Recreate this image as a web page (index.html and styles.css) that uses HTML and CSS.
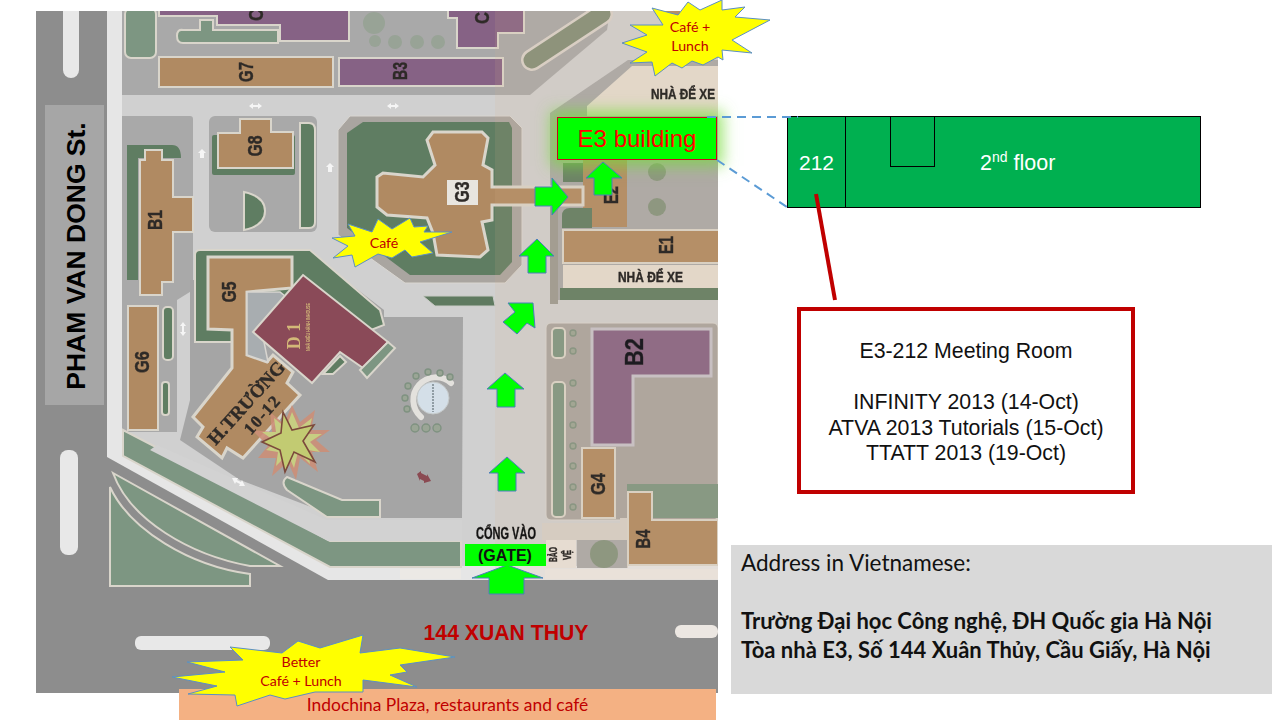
FILE: index.html
```html
<!DOCTYPE html>
<html lang="en">
<head>
<meta charset="utf-8">
<title>E3 building map</title>
<link rel="stylesheet" href="styles.css">
</head>
<body>
<main class="slide">
  <svg class="map" width="1280" height="720" viewBox="0 0 1280 720" aria-label="Campus map">
    <rect class="road" x="36" y="11" width="682" height="682"/>
    <path class="strip" d="M107 11H718V580H328L107 457Z"/>
    <path class="lane" d="M122 11H718V566H330L122 448Z"/>
    <rect class="median" x="63" y="0" width="16" height="78" rx="8"/>
    <rect class="median" x="60" y="450" width="18" height="105" rx="8"/>
    <rect class="median" x="135" y="636" width="135" height="14" rx="6"/>
    <rect class="median warm" x="675" y="625" width="43" height="13" rx="6"/>
    <path class="lawn edge" d="M110 487V586H250V574C190 566 130 530 110 487Z"/>
    <path class="lawn edge" d="M113 473L280 566H250C190 555 130 520 113 473Z"/>

    <!-- top blocks -->
    <path class="block" d="M122 11H610L607 30L530 95H122Z"/>
    <rect class="lawn edge" x="125" y="8" width="31" height="50" rx="6"/>
    <path class="lawn edge" d="M200 20H213V30H278V43H183Q177 43 177 36T183 30H200Z"/>
    <path class="purple edge" d="M159 8V16H217V25H280V41H349V8Z"/>
    <rect class="tan edge" x="159" y="57" width="174" height="30"/>
    <rect class="purple edge" x="339" y="58" width="164" height="28"/>
    <path class="purple edge" d="M448 8V18H457V48H498V33H524V8Z"/>
    <rect class="tan" x="663" y="8" width="17" height="7"/>
    <g class="trees">
      <circle cx="374" cy="23" r="11"/><circle cx="375" cy="41" r="6"/><circle cx="395" cy="42" r="7"/>
      <circle cx="417" cy="42" r="7"/><circle cx="438" cy="42" r="7"/>
    </g>
    <path class="pill-edge" d="M532 60L602 14"/>
    <path class="pill" d="M532 60L602 14"/>

    <!-- parking, E block -->
    <path class="block" d="M550 113L628 60H718V300H550Z"/>
    <path class="cream" d="M587 116V106L632 66H718V116Z"/>
    <rect class="lawn-dark" x="563" y="163" width="29" height="19"/>
    <path class="lawn-dark" d="M562 228V216Q562 208 570 208H592V228Z"/>
    <path class="tan" d="M583 160H627V227H592V208H583V190H583Z"/>
    <path class="lawn-dark" d="M560 288H718V300H560Z"/>
    <circle class="tree-shape" cx="657" cy="172" r="9"/>
    <circle class="tree-shape" cx="657" cy="207" r="9"/>
    <rect class="tan edge" x="563" y="230" width="156" height="33"/>
    <rect class="cream" x="563" y="265" width="155" height="23"/>
    <rect class="tan-soft" x="550" y="188" width="8" height="116"/>

    <!-- G8 and B1 -->
    <rect class="block" x="209" y="116" width="108" height="116" rx="6"/>
    <rect class="lawn-dark" x="212" y="135" width="83" height="40" rx="2"/>
    <path class="tan edge" d="M240 119H271V132H293V168H218V133H240Z"/>
    <path class="lawn-dark edge" d="M300 123H309Q315 123 315 130V222Q315 228 309 228H300Z"/>
    <path class="lawn-dark edge" d="M244 192C258 195 265 202 265 211S258 227 244 230Z"/>
    <path class="block" d="M122 116H190Q193 116 193 119V290L177 300V432H125L122 430Z"/>
    <path class="lawn-dark" d="M127 145H172Q181 145 181 158H138V280H127Z"/>
    <path class="tan edge" d="M145 150H162V160H173V197H193V232H173V282H162V295H140V160H145Z"/>
    <rect class="tan edge" x="128" y="306" width="30" height="124"/>
    <rect class="lawn-dark edge" x="163" y="307" width="10" height="53" rx="4"/>
    <rect class="lawn-dark edge" x="162" y="382" width="7" height="33" rx="3"/>

    <!-- G3 -->
    <path class="ring" d="M350 116H510L522 128V265L505 283H405L338 235V130Z"/>
    <path class="lawn-dark" d="M363 122H509L512 128V262L500 275H410L347 228V133Z"/>
    <path class="tan edge-thick" d="M433 132H482L488 138L483 165L492 170V187H583V205H492V220L482 222L488 250L480 257L437 255L433 233L427 218L387 215L377 207V177L383 173L423 177L435 165L427 140Z"/>
    <rect class="plate" x="447" y="180" width="31" height="25"/>

    <!-- plaza and lower-left -->
    <path class="plaza" d="M190 345V400L180 440L240 480L340 518H462L463 317H384V310L345 280H190Z"/>
    <path class="lawn edge" d="M123 430V456L330 567H461V541H330L233 487Z"/>
    <path class="lane-soft" d="M157 445L327 520H462V541H328L150 450Z"/>
    <path class="lawn edge" d="M287 477L342 500H380V517H327L287 490Q280 482 287 477Z"/>
    <path class="lawn-dark edge" d="M195 255Q195 250 200 250H310L380 310L384 325L340 342H195Z"/>
    <path class="tan edge-thick" d="M208 257H292V288L247 292V355L267 362L273 355L293 372L287 383L300 395L243 458L227 448L222 458L197 437L203 427L193 417L232 368V330L208 329Z"/>
    <path class="block-cool" d="M247 292H280L290 300L262 332L268 362L247 355Z"/>
    <path class="maroon edge" d="M303 275L388 342L363 368L340 352L312 383L253 332Z"/>
    <path class="lawn-dark edge" d="M323 374L340 356L346 362L333 374Z"/>
    <path class="lawn edge" d="M360 370L388 342L395 348L367 378Z"/>
    <path class="lawn edge-dark" d="M423 296H493L495 306H435Z"/>
    <g class="fountain">
      <path class="fountain-ring" d="M451 383A22 22 0 1 0 421 417"/>
      <circle class="water" cx="433" cy="398" r="16"/>
      <path class="water-line" d="M433 384V412"/>
    </g>
    <g class="tree-rings">
      <circle cx="416" cy="376" r="3"/><circle cx="428" cy="372" r="3"/><circle cx="440" cy="373" r="3"/><circle cx="450" cy="377" r="3"/>
      <circle cx="408" cy="386" r="3"/><circle cx="405" cy="398" r="3"/><circle cx="407" cy="409" r="3"/>
      <circle cx="415" cy="428" r="4"/><circle cx="426" cy="428" r="4"/><circle cx="437" cy="428" r="4"/>
    </g>
    <path class="wrong-way" d="M417 474L421 471V473L427 476V474L431 481L424 483V481L420 479V481Z"/>

    <!-- burst -->
    <path class="burst-outer" d="M292 405L300 422L315 410L311 430L330 430L316 440L330 452L312 452L318 472L300 458L296 480L288 462L272 476L276 458L258 458L268 446L252 430L272 432L270 412L284 424Z"/>
    <path class="burst-mid" d="M292 412L299 428L312 418L308 434L322 434L310 442L320 452L308 450L310 464L298 452L294 468L288 454L276 466L278 452L266 450L276 442L262 432L276 432L274 418L286 428Z"/>
    <path class="burst-star" d="M283 412L292 430L314 425L303 441L315 462L294 452L285 472L280 450L262 442L281 433Z"/>

    <!-- right column -->
    <rect class="ring" x="546" y="323" width="172" height="197" rx="5"/>
    <rect class="lawn edge" x="552" y="328" width="13" height="30" rx="4"/>
    <rect class="lawn edge" x="552" y="382" width="13" height="135" rx="4"/>
    <g class="tree-rings">
      <circle cx="573" cy="333" r="3"/><circle cx="573" cy="351" r="3"/><circle cx="573" cy="383" r="3"/>
      <circle cx="573" cy="404" r="3"/><circle cx="573" cy="425" r="3"/><circle cx="573" cy="446" r="3"/>
      <circle cx="573" cy="466" r="3"/><circle cx="573" cy="487" r="3"/><circle cx="573" cy="507" r="3"/>
    </g>
    <path class="purple edge-cool" d="M592 329H711V376H633V445H592Z"/>
    <rect class="tan edge" x="582" y="448" width="33" height="70"/>
    <rect class="lawn edge-none" x="627" y="484" width="91" height="34"/>
    <rect class="lane-warm" x="542" y="523" width="78" height="17"/>
    <rect class="lane-warm" x="620" y="518" width="8" height="50"/>
    <path class="tan edge" d="M628 492H652V520H718V565H628Z"/>
    <rect class="block" x="577" y="540" width="50" height="28"/>
    <circle class="tree-shape" cx="604" cy="554" r="14"/>
    <rect class="guard" x="546" y="540" width="30" height="28"/>
    <rect class="kerb" x="400" y="569" width="61" height="10"/>
    <rect class="kerb" x="545" y="569" width="173" height="10"/>
    <rect class="warm-tint" x="495" y="11" width="223" height="569"/>

    <!-- small white way-arrows -->
    <g class="way">
      <path d="M249 106L253 103V105H258V103L262 106L258 109V107H253V109Z"/>
      <path d="M387 106L391 103V105H395V103L399 106L395 109V107H391V109Z"/>
      <path d="M202 149L206 153H204V158H200V153H198Z"/>
      <path d="M330 163L334 167H332V172H328V167H326Z"/>
      <path d="M183 322L186 326H184V332H186L183 336L180 332H182V326H180Z"/>
      <path d="M232 478L238 478L237 480L241 482L242 480L245 486L239 486L240 484L236 482L235 484Z"/>
    </g>

    <!-- painted labels -->
    <g class="label">
      <text transform="translate(263 15) rotate(-90)" textLength="12" lengthAdjust="spacingAndGlyphs">C</text>
      <text transform="translate(489 18) rotate(-90)" textLength="12" lengthAdjust="spacingAndGlyphs">C</text>
      <text transform="translate(253 72) rotate(-90)" textLength="20" lengthAdjust="spacingAndGlyphs">G7</text>
      <text transform="translate(407 71) rotate(-90)" textLength="18" lengthAdjust="spacingAndGlyphs">B3</text>
      <text transform="translate(262 146) rotate(-90)" textLength="21" lengthAdjust="spacingAndGlyphs">G8</text>
      <text transform="translate(162 220) rotate(-90)" textLength="20" lengthAdjust="spacingAndGlyphs">B1</text>
      <text transform="translate(149 362) rotate(-90)" textLength="22" lengthAdjust="spacingAndGlyphs">G6</text>
      <text transform="translate(236 292) rotate(-90)" textLength="21" lengthAdjust="spacingAndGlyphs">G5</text>
      <text transform="translate(469 192) rotate(-90)" textLength="21" lengthAdjust="spacingAndGlyphs">G3</text>
      <text transform="translate(673 245) rotate(-90)" textLength="18" lengthAdjust="spacingAndGlyphs">E1</text>
      <text transform="translate(618 195) rotate(-90)" textLength="18" lengthAdjust="spacingAndGlyphs">E2</text>
      <text transform="translate(605 484) rotate(-90)" textLength="22" lengthAdjust="spacingAndGlyphs">G4</text>
      <text transform="translate(650 539) rotate(-90)" textLength="19" lengthAdjust="spacingAndGlyphs">B4</text>
      <text class="label-big" transform="translate(643 352) rotate(-90)" textLength="28" lengthAdjust="spacingAndGlyphs">B2</text>
      <text class="label-wide" x="651" y="99" textLength="64" lengthAdjust="spacingAndGlyphs">NHÀ ĐỂ XE</text>
      <text class="label-wide" x="618" y="282" textLength="65" lengthAdjust="spacingAndGlyphs">NHÀ ĐỂ XE</text>
      <text class="label-small" transform="translate(557 562) rotate(-90)" textLength="15" lengthAdjust="spacingAndGlyphs">BẢO</text>
      <text class="label-small" transform="translate(571 560) rotate(-90)" textLength="10" lengthAdjust="spacingAndGlyphs">VỆ</text>
      <text class="label-gate" x="476" y="539" textLength="60" lengthAdjust="spacingAndGlyphs">CỔNG VÀO</text>
      <text class="label-serif" transform="translate(251 407) rotate(-48)" textLength="105">H.TRƯỜNG</text>
      <text class="label-serif small" transform="translate(266 419) rotate(-48)" textLength="45">10-12</text>
      <text class="label-d1" transform="translate(300 336) rotate(-90)">D 1</text>
      <text class="label-d1-small" transform="translate(310 327) rotate(-90)" textLength="48" lengthAdjust="spacingAndGlyphs">NHÀ ĐIỀU HÀNH INHOUSE</text>
    </g>
  </svg>

  <div class="floor">
    <div class="room">212</div>
    <div class="notch"></div>
    <div class="floor-name">2<sup>nd</sup> floor</div>
  </div>
  <div class="e3">E3 building</div>

  <section class="meeting">
    <p>E3-212 Meeting Room</p>
    <p>INFINITY 2013 (14-Oct)<br>ATVA 2013 Tutorials (15-Oct)<br>TTATT 2013 (19-Oct)</p>
  </section>

  <section class="address">
    <p>Address in Vietnamese:</p>
    <p class="strong">Trường Đại học Công nghệ, ĐH Quốc gia Hà Nội<br>Tòa nhà E3, Số 144 Xuân Thủy, Cầu Giấy, Hà Nội</p>
  </section>

  <div class="plaza-bar">Indochina Plaza, restaurants and café</div>

  <svg class="overlay" width="1280" height="720" viewBox="0 0 1280 720">
    <rect class="sign" x="45" y="105" width="59" height="300"/>
    <text class="sign-text" transform="translate(85 256) rotate(-90)">PHAM VAN DONG St.</text>
    <text class="street" x="506" y="640">144 XUAN THUY</text>
    <path class="dash" d="M707 117H798"/>
    <path class="dash" d="M717 160L787 207"/>
    <path class="pointer" d="M816 194L835 300"/>
    <g class="arrow">
      <path d="M507 565L543 578H524V594H489V578H472Z"/>
      <path d="M507 457L525 473H516V491H498V473H489Z"/>
      <path d="M505 373L524 389H515V407H497V389H487Z"/>
      <path d="M508 303H533L535 328L527 323L517 334L503 322L515 312Z"/>
      <path d="M537 239L554 256H546V273H528V256H519Z"/>
      <path d="M568 197L552 215V206H535V187H552V178Z"/>
      <path d="M603 162L622 178H612V195H594V178H586Z"/>
    </g>
    <rect class="gate" x="465" y="544" width="81" height="22"/>
    <text class="gate-text" x="505" y="561">(GATE)</text>
    <path class="star" d="M652 8L663 25L630 25L647 35L622 43L647 52L630 63L652 62L655 76L672 63L682 68L692 61L703 65L718 57L723 60L722 50L752 53L732 40L770 20L735 17L745 7L722 10L722 0L700 10L688 2L678 15Z"/>
    <text class="star-text" x="690" y="32">Café +</text>
    <text class="star-text" x="690" y="51">Lunch</text>
    <path class="star" d="M348 224L372 232L378 219L392 229L410 218L414 227L428 226L424 232L452 232L420 242L433 253L412 257L405 250L392 258L378 254L355 267L352 255L333 258L348 246L332 238L355 236Z"/>
    <text class="star-text" x="384" y="248">Café</text>
    <path class="star" d="M363 635L360 653L400 648L455 657L400 665L407 672L390 675L417 687L363 680L363 692L315 692L285 699L270 695L237 706L235 695L188 694L217 686L172 677L225 672L187 662L243 660L230 647L282 653L298 641L320 648Z"/>
    <text class="star-text" x="301" y="667">Better</text>
    <text class="star-text" x="301" y="686">Café + Lunch</text>
  </svg>
</main>
</body>
</html>
```
FILE: styles.css
```css
html, body { margin: 0; padding: 0; background: #fff; }
body { width: 1280px; height: 720px; overflow: hidden; }
.slide { position: relative; width: 1280px; height: 720px; font-family: "Liberation Sans", Arial, sans-serif; }
.slide p { margin: 0; }
.map, .overlay { position: absolute; left: 0; top: 0; display: block; }
.map { clip-path: inset(11px 562px 27px 36px); filter: blur(0.45px); }
.overlay { pointer-events: none; }

.road { fill: #8d8d8d; }
.strip { fill: #e6e6e6; }
.lane { fill: #d0d0d0; }
.lane-soft { fill: #d2d2d2; }
.lane-warm { fill: #d6d0ca; }
.median { fill: #e8e8e8; }
.warm { fill: #ece7e2; }
.block { fill: #a9a9a9; }
.block-cool { fill: #a8adb0; stroke: #d8d5d0; stroke-width: 1.5; }
.ring { fill: #a9a5a0; stroke: #d9d6d1; stroke-width: 1; }
.plaza { fill: #a5a5a5; }
.lawn { fill: #7d9682; }
.lawn-dark { fill: #5f7d62; }
.edge { stroke: #d9d5cb; stroke-width: 2; }
.edge-thick { stroke: #d9d5cb; stroke-width: 3; }
.edge-cool { stroke: #c6c3cb; stroke-width: 3; }
.edge-dark { stroke: #c9cbc5; stroke-width: 1; fill: #5f7a60; }
.edge-none { stroke: none; }
.tan { fill: #b08a62; }
.tan-soft { fill: #9b9a92; }
.purple { fill: #866285; }
.maroon { fill: #8a4a58; }
.cream { fill: #e5ddd1; }
.plate { fill: #e8e5df; }
.guard { fill: #e8e3dc; }
.kerb { fill: #ece9e5; }
.warm-tint { fill: rgba(214, 176, 138, 0.13); }
.trees { fill: #98a396; }
.tree-shape { fill: #84947f; }
.tree-rings circle { fill: #9aa595; stroke: #7f9281; stroke-width: 1.4; }
.pill-edge { fill: none; stroke: #d9d3cc; stroke-width: 22; stroke-linecap: round; }
.pill { fill: none; stroke: #838f79; stroke-width: 17; stroke-linecap: round; }
.fountain-ring { fill: none; stroke: #e3e1dd; stroke-width: 6; stroke-linecap: round; }
.water { fill: #d4dfe8; stroke: #c5c9c9; }
.water-line { stroke: #4d5a60; stroke-width: 1; stroke-dasharray: 2 1; }
.wrong-way { fill: #8b4a52; }
.way { fill: #f5f5f5; }
.burst-outer { fill: #cc8f78; opacity: 0.9; }
.burst-mid { fill: #c7ce82; }
.burst-star { fill: #c2cb72; stroke: #7c4a3c; stroke-width: 1.6; }

.label text { text-anchor: middle; font-family: "Liberation Sans", sans-serif; font-weight: 700; font-size: 20px; fill: #2e2a27; stroke: #2e2a27; stroke-width: 0.4px; }
.label .label-big { font-size: 26px; fill: #1c1a20; }
.label .label-wide { font-size: 14px; text-anchor: start; }
.label .label-small { font-size: 10px; text-anchor: start; }
.label .label-gate { font-size: 16px; fill: #111; text-anchor: start; }
.label .label-serif { font-family: "Liberation Serif", serif; font-size: 19px; }
.label .small { font-size: 17px; }
.label .label-d1 { font-family: "Liberation Serif", serif; font-size: 18px; fill: #d3b878; stroke: none; }
.label .label-d1-small { font-size: 6px; fill: #d3b878; stroke: none; }

.sign { fill: #a6a6a6; }
.sign-text { text-anchor: middle; font-weight: 700; font-size: 26.5px; fill: #000; }
.street { text-anchor: middle; font-weight: 700; font-size: 21.2px; fill: #c00000; }

.floor { position: absolute; left: 787px; top: 116px; width: 414px; height: 92px; display: flex; align-items: center; box-sizing: border-box; background: #00b050; border: 1px solid #000; color: #fff; font-size: 21px; }
.room { width: 58px; height: 100%; border-right: 1px solid #000; display: flex; align-items: center; justify-content: center; padding-top: 2px; box-sizing: border-box; }
.notch { position: absolute; left: 102px; top: 0; width: 45px; height: 50px; box-sizing: border-box; border: 1px solid #000; border-top: 0; }
.floor-name { margin-left: 134px; padding-top: 2px; font-size: 21.5px; }
.floor-name sup { font-size: 14px; line-height: 0; }

.e3 { position: absolute; left: 557px; top: 117px; width: 160px; height: 43px; box-sizing: border-box; display: flex; align-items: center; justify-content: center; background: #00ff00; border: 1px solid #d0021b; color: #ff0000; font-size: 24px; box-shadow: 0 0 14px 6px rgba(120, 220, 60, 0.7); }

.meeting { position: absolute; left: 797px; top: 307px; width: 338px; height: 187px; box-sizing: border-box; padding-top: 4px; border: 4px solid #c00000; display: flex; flex-direction: column; justify-content: center; gap: 26px; text-align: center; font-size: 21.3px; line-height: 25.5px; color: #111; }

.address { position: absolute; left: 731px; top: 545px; width: 541px; height: 149px; box-sizing: border-box; padding: 3px 10px; background: #d9d9d9; font-family: "Lato", "Noto Sans", sans-serif; font-size: 22.5px; line-height: 29px; color: #111; display: flex; flex-direction: column; gap: 29px; }
.address .strong { font-weight: 700; font-size: 22px; }

.plaza-bar { position: absolute; left: 179px; top: 689px; width: 537px; height: 31px; display: flex; align-items: center; justify-content: center; background: #f4b183; color: #c00000; font-family: "Lato", "Noto Sans", sans-serif; font-size: 17.4px; }

.dash { fill: none; stroke: #5b9bd5; stroke-width: 2; stroke-dasharray: 9 6; }
.pointer { fill: none; stroke: #c00000; stroke-width: 4; }
.arrow path { fill: #00ff00; stroke: #4a7ebb; stroke-width: 1; }
.gate { fill: #00ff00; }
.gate-text { text-anchor: middle; font-weight: 700; font-size: 16px; fill: #111; }
.star { fill: #ffff00; stroke: #5b8fc4; stroke-width: 1; }
.star-text { text-anchor: middle; font-family: "Lato", "Noto Sans", sans-serif; font-size: 14.2px; fill: #c00000; }
```
